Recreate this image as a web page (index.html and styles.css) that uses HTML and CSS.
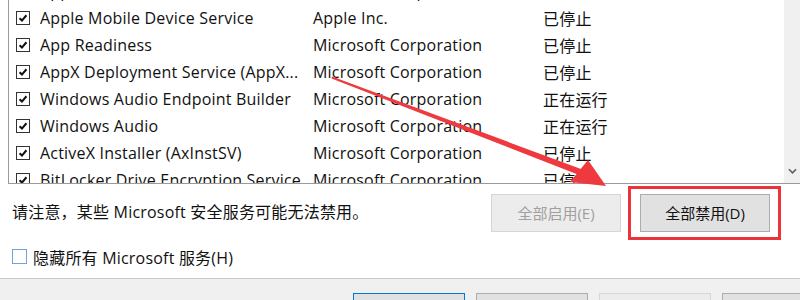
FILE: index.html
```html
<!DOCTYPE html>
<html lang="zh-CN">
<head>
    <meta charset="UTF-8">
    <title>系统配置 - 服务</title>
    <link rel="stylesheet" href="styles.css">
</head>
<body>
    <div id="page">
        <div class="service_list">
            <div class="rows">
                <div class="row">
                    <span class="chk on"><svg viewBox="0 0 14 14"><path d="M3 7.2 L5.8 10 L11 3.8" /></svg></span>
                    <span class="c_name">Application Information</span>
                    <span class="c_maker">Microsoft Corporation</span>
                    <span class="c_state">正在运行</span>
                </div>
                <div class="row">
                    <span class="chk on"><svg viewBox="0 0 14 14"><path d="M3 7.2 L5.8 10 L11 3.8" /></svg></span>
                    <span class="c_name">Apple Mobile Device Service</span>
                    <span class="c_maker">Apple Inc.</span>
                    <span class="c_state">已停止</span>
                </div>
                <div class="row">
                    <span class="chk on"><svg viewBox="0 0 14 14"><path d="M3 7.2 L5.8 10 L11 3.8" /></svg></span>
                    <span class="c_name">App Readiness</span>
                    <span class="c_maker">Microsoft Corporation</span>
                    <span class="c_state">已停止</span>
                </div>
                <div class="row">
                    <span class="chk on"><svg viewBox="0 0 14 14"><path d="M3 7.2 L5.8 10 L11 3.8" /></svg></span>
                    <span class="c_name">AppX Deployment Service (AppX...</span>
                    <span class="c_maker">Microsoft Corporation</span>
                    <span class="c_state">已停止</span>
                </div>
                <div class="row">
                    <span class="chk on"><svg viewBox="0 0 14 14"><path d="M3 7.2 L5.8 10 L11 3.8" /></svg></span>
                    <span class="c_name">Windows Audio Endpoint Builder</span>
                    <span class="c_maker">Microsoft Corporation</span>
                    <span class="c_state">正在运行</span>
                </div>
                <div class="row">
                    <span class="chk on"><svg viewBox="0 0 14 14"><path d="M3 7.2 L5.8 10 L11 3.8" /></svg></span>
                    <span class="c_name">Windows Audio</span>
                    <span class="c_maker">Microsoft Corporation</span>
                    <span class="c_state">正在运行</span>
                </div>
                <div class="row">
                    <span class="chk on"><svg viewBox="0 0 14 14"><path d="M3 7.2 L5.8 10 L11 3.8" /></svg></span>
                    <span class="c_name">ActiveX Installer (AxInstSV)</span>
                    <span class="c_maker">Microsoft Corporation</span>
                    <span class="c_state">已停止</span>
                </div>
                <div class="row">
                    <span class="chk on"><svg viewBox="0 0 14 14"><path d="M3 7.2 L5.8 10 L11 3.8" /></svg></span>
                    <span class="c_name">BitLocker Drive Encryption Service</span>
                    <span class="c_maker">Microsoft Corporation</span>
                    <span class="c_state">已停止</span>
                </div>
            </div>
            <div class="scrollbar">
                <svg class="arrow_down" viewBox="0 0 10 6"><path d="M1 1 L5 5 L9 1" /></svg>
            </div>
        </div>

        <div class="actions">
            <div class="note">请注意，某些 Microsoft 安全服务可能无法禁用。</div>
            <div class="btn disabled">全部启用(E)</div>
            <div class="btn highlighted">全部禁用(D)<span class="red_box"></span></div>
        </div>

        <div class="hide_ms">
            <span class="chk blue"></span>
            <span>隐藏所有 Microsoft 服务(H)</span>
        </div>

        <div class="footer">
            <div class="btn small default">确定</div>
            <div class="btn small">取消</div>
            <div class="btn small disabled">应用(A)</div>
            <div class="btn small">帮助</div>
        </div>

        <!-- flèche rouge par-dessus la liste -->
        <svg class="red_arrow" width="800" height="300" viewBox="0 0 800 300">
            <polygon points="332,76.5 331.5,78.5 579,175 581,169" />
            <polygon points="606,186 570,182 588,160" />
        </svg>
    </div>
</body>
</html>
```

FILE: styles.css
```css
body {
    margin: 0;
    background: #fff;
    font-family: "Open Sans", "Noto Sans CJK SC", sans-serif;
    font-size: 16px;
    letter-spacing: 0.2px;
    color: #111;
}

#page {
    position: relative;
    width: 800px;
    height: 300px;
    overflow: hidden;
}

.service_list {
    display: flex;
    margin-left: 8px;
    height: 183px;
    border-left: 1px solid #9a9a9a;
    border-bottom: 1px solid #9a9a9a;
    overflow: hidden;
}

.rows {
    flex: 1;
    margin-top: -23px;
}

.row {
    display: flex;
    align-items: center;
    height: 27px;
    white-space: nowrap;
}

.chk {
    display: inline-block;
    box-sizing: border-box;
    width: 14px;
    height: 14px;
    border: 1px solid #333;
    background: #fff;
}

.row .chk {
    margin-left: 7px;
    margin-right: 10px;
}

.chk svg {
    display: block;
    width: 12px;
    height: 12px;
}

.chk path {
    fill: none;
    stroke: #111;
    stroke-width: 2.4;
}

.c_name {
    width: 273px;
    overflow: hidden;
}

.c_maker {
    width: 230px;
}

.scrollbar {
    position: relative;
    width: 16px;
    background: #f0f0f0;
}

.arrow_down {
    position: absolute;
    left: 4px;
    bottom: 9px;
    width: 9px;
    height: 6px;
}

.arrow_down path {
    fill: none;
    stroke: #606060;
    stroke-width: 1.8;
}

.actions {
    display: flex;
    align-items: center;
    padding: 10px 0 0 12px;
}

.note {
    flex: 1;
    margin-top: -4px;
}

.btn {
    position: relative;
    box-sizing: border-box;
    width: 130px;
    height: 38px;
    line-height: 36px;
    text-align: center;
    font-size: 15px;
    letter-spacing: 0;
    border: 1px solid #adadad;
    background: #e1e1e1;
    color: #111;
}

.btn.disabled {
    border-color: #d6d6d6;
    background: #ececec;
    color: #a0a0a0;
}

.btn.highlighted {
    margin-left: 19px;
    margin-right: 30px;
}

.red_box {
    position: absolute;
    top: -9px;
    left: -13px;
    right: -12px;
    bottom: -9px;
    border: 3px solid #ec3339;
}

.hide_ms {
    display: flex;
    align-items: center;
    gap: 6px;
    padding: 13px 0 0 12px;
    height: 23px;
}

.chk.blue {
    width: 15px;
    height: 15px;
    border-color: #6fa3dd;
}

.footer {
    display: flex;
    gap: 11px;
    margin-top: 10px;
    padding: 14px 0 0 353px;
    height: 40px;
    border-top: 1px solid #c8c8c8;
    background: #f0f0f0;
}

.btn.small {
    flex: none;
    width: 112px;
    height: 34px;
    color: transparent;
}

.btn.default {
    border-color: #0078d7;
}

.red_arrow {
    position: absolute;
    left: 0;
    top: 0;
}

.red_arrow polygon {
    fill: #ee3a3e;
}
```
